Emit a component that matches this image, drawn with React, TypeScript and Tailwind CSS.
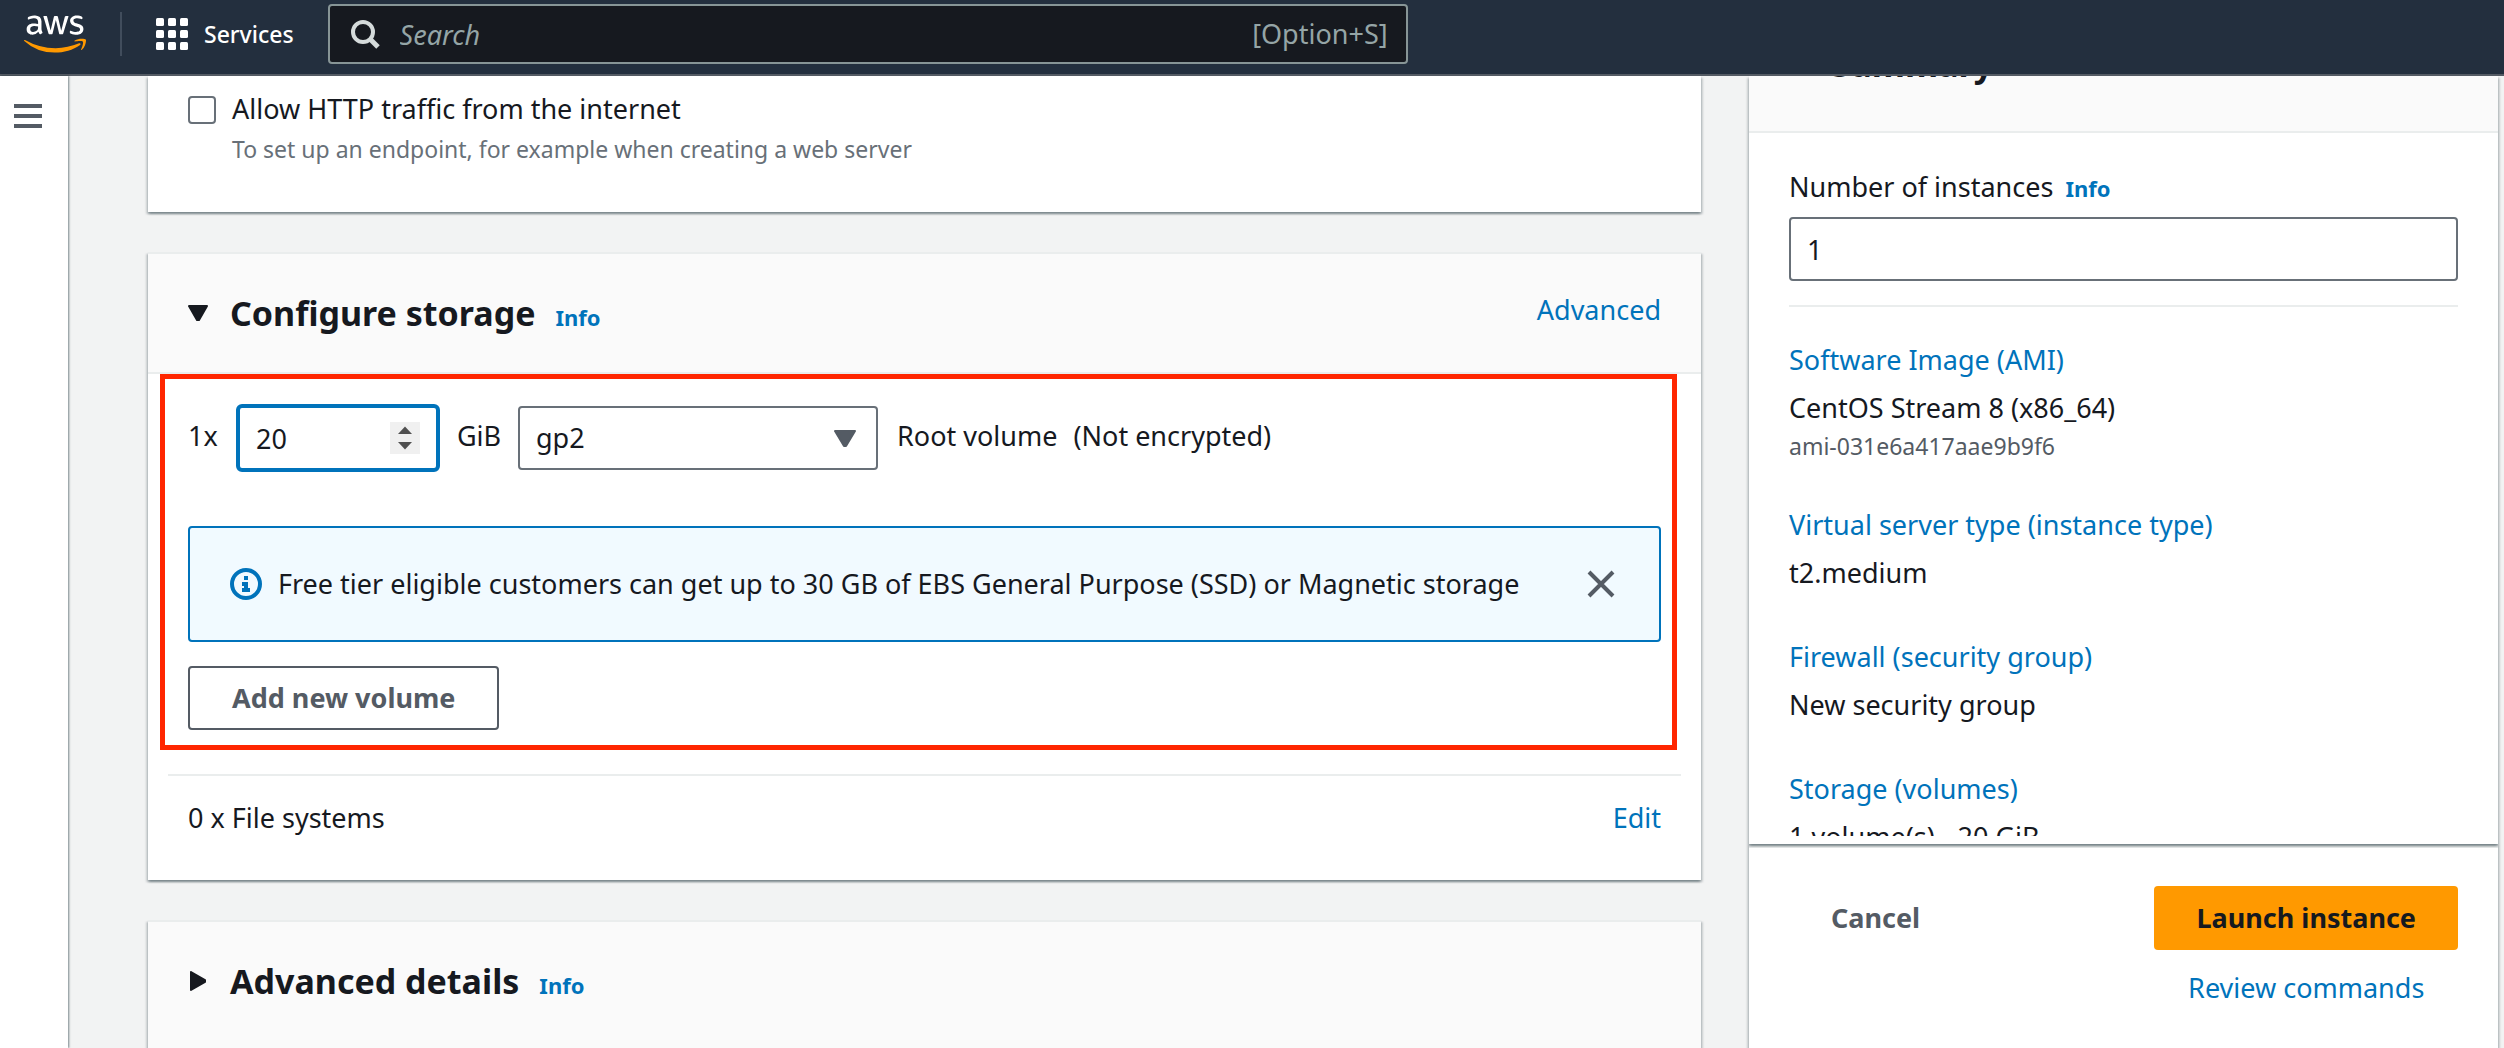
import type { ReactNode } from "react";
import { FaAws } from "react-icons/fa";

const panel =
  "bg-white shadow-[0_2px_2px_rgba(0,28,36,0.3),2px_2px_2px_rgba(0,28,36,0.15),-2px_2px_2px_rgba(0,28,36,0.15)]";
const link = "text-[#0073bb] hover:underline";

function AwsLogo() {
  return (
    <a href="#home" aria-label="AWS home" className="shrink-0">
      <svg width="0" height="0" className="absolute" aria-hidden="true">
        <linearGradient id="awsInk" x1="0" y1="0" x2="0" y2="1">
          <stop offset="0.6" stopColor="#ffffff" />
          <stop offset="0.6" stopColor="#ff9900" />
        </linearGradient>
      </svg>
      <FaAws className="h-[50px] w-[62px]" style={{ fill: "url(#awsInk)" }} />
    </a>
  );
}

function GridIcon() {
  const cells = [0, 12, 24];
  return (
    <svg width="32" height="32" viewBox="0 0 32 32" fill="#ffffff" aria-hidden="true">
      {cells.map((y) => cells.map((x) => <rect key={`${x}-${y}`} x={x} y={y} width="8" height="8" rx="1.5" />))}
    </svg>
  );
}

function TopBar() {
  return (
    <header className="flex h-[76px] shrink-0 items-center border-b-2 border-[#545b64] bg-[#232f3e] pb-1.5 pl-6 text-white">
      <AwsLogo />
      <div className="ml-[34px] h-11 w-0.5 bg-[#414d5c]" />
      <button type="button" className="ml-[34px] flex items-center gap-4 text-[23px] leading-8 font-medium">
        <GridIcon />
        Services
      </button>
      <div className="relative mr-10 ml-[34px] h-[60px] w-full max-w-[1080px]">
        <input
          type="search"
          aria-label="Search"
          placeholder="Search"
          className="h-full w-full rounded-[4px] border-2 border-[#879596] bg-[#16191f] pr-44 pl-[70px] placeholder:text-[#95a5a6] placeholder:italic"
        />
        <svg className="absolute top-4 left-[22px]" width="30" height="30" viewBox="0 0 30 30" fill="none" stroke="#d5dbdb" strokeWidth="4" aria-hidden="true">
          <circle cx="13" cy="12" r="10" />
          <path d="M20 19l8 8" strokeWidth="5" />
        </svg>
        <span className="absolute inset-y-0 right-5 flex items-center text-[#95a5a6]">[Option+S]</span>
      </div>
    </header>
  );
}

function SideNav() {
  return (
    <nav className="w-[68px] shrink-0 bg-white pt-7 pl-3.5 shadow-[1px_0_2px_rgba(0,28,36,0.5)]">
      <button type="button" aria-label="Open navigation" className="block">
        <svg width="28" height="24" viewBox="0 0 28 24" fill="#545b64" aria-hidden="true">
          <rect width="28" height="4" />
          <rect y="10" width="28" height="4" />
          <rect y="20" width="28" height="4" />
        </svg>
      </button>
    </nav>
  );
}

function Triangle({ open }: { open: boolean }) {
  return (
    <svg width="20" height="20" viewBox="0 0 20 20" fill="#16191f" stroke="#16191f" strokeWidth="2" strokeLinejoin="round" aria-hidden="true">
      {open ? <path d="M1 3h18l-8 14h-2z" /> : <path d="M3 1v18l14-8v-2z" />}
    </svg>
  );
}

function CardHeader({ title, open, action }: { title: string; open: boolean; action?: ReactNode }) {
  return (
    <div
      className={`flex items-start justify-between bg-[#fafafa] px-10 pt-9 ${open ? "border-b-2 border-[#eaeded] pb-9" : "pb-12"}`}
    >
      <div className="flex items-center">
        <button type="button" aria-label={`Toggle ${title}`} aria-expanded={open} className="mr-[22px]">
          <Triangle open={open} />
        </button>
        <div className="flex items-baseline gap-5">
          <h2 className="text-[34px] leading-[46px] font-bold">{title}</h2>
          <a href="#info" className={`${link} text-[22px] leading-8 font-bold`}>Info</a>
        </div>
      </div>
      {action}
    </div>
  );
}

function FirewallCard() {
  return (
    <section className={`${panel} flex shrink-0 gap-4 px-10 pt-[13px] pb-[47px]`}>
      <input
        id="allow-http"
        type="checkbox"
        className="mt-[7px] size-7 shrink-0 appearance-none rounded-[4px] border-2 border-[#687078] bg-white checked:bg-[#0073bb]"
      />
      <div>
        <label htmlFor="allow-http" className="block">Allow HTTP traffic from the internet</label>
        <p className="mt-1 text-[23px] leading-8 text-[#687078]">
          To set up an endpoint, for example when creating a web server
        </p>
      </div>
    </section>
  );
}

function VolumeRow() {
  return (
    <div className="flex items-start">
      <label htmlFor="size" className="mt-3 w-12">1x</label>
      <div className="relative">
        <input
          id="size"
          type="number"
          defaultValue={20}
          className="block h-[68px] w-[204px] rounded-[6px] border-4 border-[#0073bb] bg-white pl-4 outline-none [appearance:textfield] [&::-webkit-inner-spin-button]:appearance-none"
        />
        <svg className="absolute top-[18px] right-5" width="30" height="32" viewBox="0 0 30 32" fill="#505050" aria-hidden="true">
          <rect width="30" height="32" fill="#f0f0f0" />
          <path d="M15 4.500l7 7.500h-14z" />
          <path d="M15 27.500l7-7.500h-14z" />
        </svg>
      </div>
      <label htmlFor="type" className="mt-3 w-[78px] text-center">GiB</label>
      <div className="relative mt-0.5">
        <select
          id="type"
          defaultValue="gp2"
          className="block h-16 w-[360px] appearance-none rounded-[4px] border-2 border-[#687078] bg-white pr-14 pl-4"
        >
          <option>gp2</option>
          <option>gp3</option>
        </select>
        <svg className="pointer-events-none absolute top-6 right-[22px]" width="22" height="17" viewBox="0 0 22 17" fill="#545b64" stroke="#545b64" strokeWidth="2" strokeLinejoin="round" aria-hidden="true">
          <path d="M1 1h20l-9 15h-2z" />
        </svg>
      </div>
      <p className="mt-3 ml-[19px] flex gap-4">
        <span>Root volume</span>
        <span>(Not encrypted)</span>
      </p>
    </div>
  );
}

function FreeTierNotice() {
  return (
    <div role="status" className="mt-[54px] flex h-[116px] items-center rounded-[4px] border-2 border-[#0073bb] bg-[#f1faff] pr-11 pl-10">
      <svg className="shrink-0" width="32" height="32" viewBox="0 0 32 32" fill="none" aria-hidden="true">
        <circle cx="16" cy="16" r="14" stroke="#0073bb" strokeWidth="4" />
        <path fill="#0073bb" d="M14 8h4v4h-4zM12 14h6v6h2v4h-8v-4h2v-2h-2z" />
      </svg>
      <p className="ml-4 flex-1">
        Free tier eligible customers can get up to 30 GB of EBS General Purpose (SSD) or Magnetic storage
      </p>
      <button type="button" aria-label="Dismiss">
        <svg width="28" height="28" viewBox="0 0 28 28" stroke="#545b64" strokeWidth="4" aria-hidden="true">
          <path d="M2 2l24 24M26 2l-24 24" />
        </svg>
      </button>
    </div>
  );
}

function StorageCard() {
  return (
    <section className={`${panel} shrink-0 border-t-2 border-[#eaeded]`}>
      <CardHeader title="Configure storage" open action={<a href="#advanced" className={link}>Advanced</a>} />
      <div className="relative px-10 pt-[30px] pb-5">
        <VolumeRow />
        <FreeTierNotice />
        <button type="button" className="mt-6 h-16 rounded-[4px] border-2 border-[#545b64] px-[42px] font-bold text-[#545b64]">
          Add new volume
        </button>
        <div className="pointer-events-none absolute inset-y-0 right-6 left-3 border-[5px] border-[#ff2600]" />
      </div>
      <hr className="mx-5 mt-6 border-t-2 border-[#eaeded]" />
      <div className="flex justify-between px-10 pt-[22px] pb-[42px]">
        <span>0 x File systems</span>
        <a href="#edit" className={link}>Edit</a>
      </div>
    </section>
  );
}

function SummaryItem({ title, value, note }: { title: string; value: string; note?: string }) {
  return (
    <div>
      <dt><a href="#section" className={link}>{title}</a></dt>
      <dd className="mt-2">{value}</dd>
      {note && <dd className="mt-[3px] text-[23px] leading-[30px] text-[#545b64]">{note}</dd>}
    </div>
  );
}

function Summary() {
  return (
    <aside className="flex min-h-0 flex-col">
      <section className={`${panel} relative flex min-h-0 flex-1 flex-col pb-2`}>
        <div className="flex h-[57px] shrink-0 items-end overflow-hidden border-b-2 border-[#eaeded] bg-[#fafafa] px-[82px] pb-11">
          <h2 className="text-[34px] leading-[46px] font-bold">Summary</h2>
        </div>
        <div className="min-h-0 flex-1 overflow-hidden px-10 pt-[34px]">
          <div className="flex items-baseline gap-3">
            <label htmlFor="count">Number of instances</label>
            <a href="#info" className={`${link} text-[22px] leading-8 font-bold`}>Info</a>
          </div>
          <input id="count" type="text" defaultValue="1" className="mt-2.5 block h-16 w-full rounded-[4px] border-2 border-[#687078] bg-white px-4" />
          <hr className="mt-6 border-t-2 border-[#eaeded]" />
          <dl className="mt-[33px] flex flex-col gap-11">
            <SummaryItem title="Software Image (AMI)" value="CentOS Stream 8 (x86_64)" note="ami-031e6a417aae9b9f6" />
            <SummaryItem title="Virtual server type (instance type)" value="t2.medium" />
            <SummaryItem title="Firewall (security group)" value="New security group" />
            <SummaryItem title="Storage (volumes)" value="1 volume(s) - 20 GiB" />
          </dl>
        </div>
      </section>
      <section className={`${panel} flex shrink-0 items-start justify-between border-t-4 border-[#eaeded] px-10 pt-[38px] pb-10`}>
        <button type="button" className="h-16 px-[42px] font-bold text-[#545b64]">Cancel</button>
        <div className="flex flex-col items-center">
          <button type="button" className="h-16 rounded-[4px] bg-[#ff9900] px-[42px] font-bold">Launch instance</button>
          <a href="#review" className={`${link} mt-[18px]`}>Review commands</a>
        </div>
      </section>
    </aside>
  );
}

export default function App() {
  return (
    <div className="flex h-screen flex-col overflow-hidden bg-[#f2f3f3] font-['Noto_Sans',sans-serif] text-[27px] leading-10 text-[#16191f]">
      <TopBar />
      <div className="flex min-h-0 flex-1">
        <SideNav />
        <div className="grid min-h-0 flex-1 grid-cols-[minmax(0,1553fr)_minmax(0,749fr)] grid-rows-[minmax(0,1fr)] gap-12 overflow-hidden pr-1.5 pl-20">
          <main className="flex min-h-0 flex-col gap-10">
            <FirewallCard />
            <StorageCard />
            <section className={`${panel} shrink-0 border-t-2 border-[#eaeded]`}>
              <CardHeader title="Advanced details" open={false} />
            </section>
          </main>
          <Summary />
        </div>
      </div>
    </div>
  );
}
